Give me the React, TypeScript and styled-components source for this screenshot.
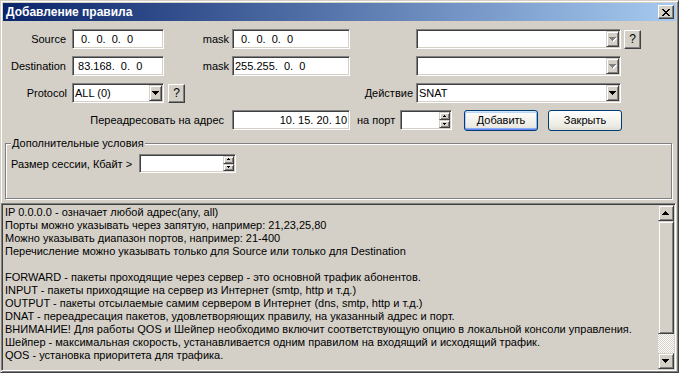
import React from 'react';
import styled, { createGlobalStyle, css } from 'styled-components';

const FACE = '#d4d0c8';

const Global = createGlobalStyle`
  html, body { margin: 0; padding: 0; background: ${FACE}; }
  * { box-sizing: border-box; }
`;

const Window = styled.div`
  width: 679px;
  height: 373px;
  background: ${FACE};
  border: 1px solid;
  border-color: ${FACE} #404040 #404040 ${FACE};
  box-shadow: inset 1px 1px #fff, inset -1px -1px #808080;
  padding: 2px;
  display: flex;
  flex-direction: column;
  font: 11px "Liberation Sans", Arial, sans-serif;
  color: #000;
  overflow: hidden;
`;

const TitleBar = styled.div`
  height: 18px;
  flex: none;
  background: linear-gradient(to right, #0a246a, #a6caf0);
  display: flex;
  align-items: center;
  justify-content: space-between;
  padding: 0 2px 0 3px;
`;

const Title = styled.span`
  color: #fff;
  font-weight: bold;
  font-size: 12px;
`;

const raised = css`
  background: ${FACE};
  border: 1px solid;
  border-color: #fff #404040 #404040 #fff;
  box-shadow: inset -1px -1px #808080;
`;

const smallRaised = css`
  background: ${FACE};
  border: 1px solid;
  border-color: ${FACE} #404040 #404040 ${FACE};
  box-shadow: inset 1px 1px #fff, inset -1px -1px #808080;
`;

const CloseButton = styled.div`
  ${raised};
  width: 16px;
  height: 14px;
  display: flex;
  align-items: center;
  justify-content: center;
  padding-right: 1px;
`;

const FormGrid = styled.div`
  display: grid;
  grid-template-columns: 69px 92px 68px 118px 66px 205px 20px;
  grid-auto-rows: 20px;
  row-gap: 7px;
  margin-top: 8px;
  align-items: center;
`;

const Label = styled.span<{ $pr: number; $span?: number }>`
  grid-column: span ${p => p.$span ?? 1};
  text-align: right;
  padding-right: ${p => p.$pr}px;
  white-space: nowrap;
`;

const Spacer = styled.span``;

const sunken = css`
  border: 1px solid;
  border-color: #808080 #fff #fff #808080;
  box-shadow: inset 1px 1px #404040, inset -1px -1px ${FACE};
  padding: 1px;
`;

const Field = styled.div<{ $align?: 'left' | 'right' }>`
  ${sunken};
  background: #fff;
  height: 20px;
  display: flex;
  align-items: center;
  justify-content: ${p => (p.$align === 'right' ? 'flex-end' : 'flex-start')};
  padding-left: ${p => (p.$align === 'right' ? 1 : 2)}px;
  padding-right: 2px;
  white-space: pre;
`;

const Combo = styled.div`
  ${sunken};
  background: #fff;
  height: 20px;
  display: flex;
  align-items: stretch;
`;

const ComboValue = styled.span`
  flex: 1;
  display: flex;
  align-items: center;
  padding-left: 1px;
  white-space: nowrap;
`;

const ArrowButton = styled.span`
  ${smallRaised};
  width: 13px;
  display: flex;
  align-items: center;
  justify-content: center;
`;

const HelpButton = styled.div<{ $ml: number }>`
  ${raised};
  width: 17px;
  height: 19px;
  margin-left: ${p => p.$ml}px;
  justify-self: start;
  display: flex;
  align-items: center;
  justify-content: center;
  font-size: 12px;
`;

const ActionBar = styled.div`
  grid-column: span 3;
  display: flex;
  align-items: center;
  height: 21px;
`;

const PortLabel = styled.span`
  margin-left: 7px;
  width: 43px;
  white-space: nowrap;
`;

const Spin = styled.div<{ $w: number; $h: number }>`
  ${sunken};
  background: #fff;
  width: ${p => p.$w}px;
  height: ${p => p.$h}px;
  display: flex;
  justify-content: flex-end;
`;

const SpinButtons = styled.div`
  width: 11px;
  display: flex;
  flex-direction: column;
`;

const SpinHalf = styled.span`
  ${smallRaised};
  flex: 1;
  display: flex;
  align-items: center;
  justify-content: center;
`;

const XpButton = styled.div<{ $default?: boolean }>`
  width: 74px;
  height: 21px;
  border: 1px solid #003c74;
  border-radius: 3px;
  background: linear-gradient(#ffffff, #f4f3ee 45%, #ebe9e1 85%, #d8d3c8);
  display: flex;
  align-items: center;
  justify-content: center;
  margin-left: ${p => (p.$default ? 12 : 10)}px;
  box-shadow: ${p =>
    p.$default
      ? 'inset 0 1px #cee7ff, inset 0 -1px #6982ee, inset 1px 0 #b3cbf5, inset -1px 0 #95b4f3, inset 0 2px #bcd4f6, inset 0 -2px #89adf4'
      : 'inset 0 -1px #e3e0d8'};
`;

const Group = styled.div`
  margin: 13px 4px 0 2px;
  height: 56px;
  flex: none;
  border: 1px solid #808080;
  box-shadow: inset 1px 1px #fff, 1px 1px #fff;
  display: flex;
  flex-direction: column;
`;

const Legend = styled.span`
  align-self: flex-start;
  margin: -8px 0 0 5px;
  padding: 0 1px;
  line-height: 14px;
  background: ${FACE};
`;

const GroupRow = styled.div`
  display: flex;
  align-items: center;
  margin-top: 4px;
  padding-left: 5px;
`;

const GroupLabel = styled.span`
  width: 128px;
  white-space: nowrap;
`;

const Memo = styled.div`
  flex: 1;
  margin: 4px 0 -1px -2px;
  border: 1px solid;
  border-color: #808080 #fff #fff #808080;
  box-shadow: inset 1px 1px #404040, inset -1px -1px ${FACE};
  padding: 1px;
  background: ${FACE};
  display: flex;
  overflow: hidden;
`;

const MemoText = styled.div`
  flex: 1;
  padding: 1px 0 0 2px;
  line-height: 13px;
  white-space: pre;
  overflow: hidden;
`;

const ScrollBar = styled.div`
  width: 16px;
  display: flex;
  flex-direction: column;
`;

const ScrollArrow = styled.div`
  ${smallRaised};
  height: 16px;
  flex: none;
  display: flex;
  align-items: center;
  justify-content: center;
`;

const Thumb = styled.div`
  ${smallRaised};
  height: 113px;
  flex: none;
`;

const Track = styled.div`
  flex: 1;
  background: repeating-conic-gradient(#fff 0 25%, ${FACE} 0 50%) 0 0 / 2px 2px;
`;

const Arrow: React.FC<{ dir: 'up' | 'down'; base?: number; disabled?: boolean }> = ({
  dir,
  base = 7,
  disabled,
}) => {
  const rows = (base + 1) / 2;
  const rects: { x: number; y: number; w: number }[] = [];
  for (let i = 0; i < rows; i++) {
    rects.push({ x: i, y: dir === 'down' ? i : rows - 1 - i, w: base - 2 * i });
  }
  const W = base + 1;
  const H = rows + 1;
  return (
    <svg width={W} height={H} viewBox={`0 0 ${W} ${H}`} shapeRendering="crispEdges">
      {disabled &&
        rects.map((r, k) => (
          <rect key={'s' + k} x={r.x + 1} y={r.y + 1} width={r.w} height={1} fill="#fff" />
        ))}
      {rects.map((r, k) => (
        <rect key={k} x={r.x} y={r.y} width={r.w} height={1} fill={disabled ? '#808080' : '#000'} />
      ))}
    </svg>
  );
};

const CloseGlyph: React.FC = () => {
  const pattern = ['##....##', '.##..##.', '..####..', '...##...', '..####..', '.##..##.', '##....##'];
  const rects: React.ReactNode[] = [];
  pattern.forEach((row, y) =>
    row.split('').forEach((c, x) => {
      if (c === '#') rects.push(<rect key={`${x}-${y}`} x={x} y={y} width={1} height={1} fill="#000" />);
    })
  );
  return (
    <svg width={8} height={7} viewBox="0 0 8 7" shapeRendering="crispEdges">
      {rects}
    </svg>
  );
};

const IpField: React.FC<{ value: string[] }> = ({ value }) => (
  <Field>{value.map(o => o.padStart(3, ' ')).join('.')}</Field>
);

const ComboBox: React.FC<{ value?: string; disabled?: boolean }> = ({ value = '', disabled }) => (
  <Combo>
    <ComboValue>{value}</ComboValue>
    <ArrowButton>
      <Arrow dir="down" disabled={disabled} />
    </ArrowButton>
  </Combo>
);

const SpinBox: React.FC<{ w: number; h: number }> = ({ w, h }) => (
  <Spin $w={w} $h={h}>
    <SpinButtons>
      <SpinHalf>
        <Arrow dir="up" base={3} />
      </SpinHalf>
      <SpinHalf>
        <Arrow dir="down" base={3} />
      </SpinHalf>
    </SpinButtons>
  </Spin>
);

const lines = [
  'IP 0.0.0.0 - означает любой адрес(any, all)',
  'Порты можно указывать через запятую, например: 21,23,25,80',
  'Можно указывать диапазон портов, например: 21-400',
  'Перечисление можно указывать только для Source или только для Destination',
  '',
  'FORWARD - пакеты проходящие через сервер - это основной трафик абонентов.',
  'INPUT - пакеты приходящие на сервер из Интернет (smtp, http и т.д.)',
  'OUTPUT - пакеты отсылаемые самим сервером в Интернет (dns, smtp, http и т.д.)',
  'DNAT - переадресация пакетов, удовлетворяющих правилу, на указанный адрес и порт.',
  'ВНИМАНИЕ! Для работы QOS и Шейпер необходимо включит соответствующую опцию в локальной консоли управления.',
  'Шейпер - максимальная скорость, устанавливается одним правилом на входящий и исходящий трафик.',
  'QOS - установка приоритета для трафика.',
];

export default function App() {
  return (
    <>
      <Global />
      <Window>
        <TitleBar>
          <Title>Добавление правила</Title>
          <CloseButton>
            <CloseGlyph />
          </CloseButton>
        </TitleBar>

        <FormGrid>
          <Label $pr={6}>Source</Label>
          <IpField value={['0', '0', '0', '0']} />
          <Label $pr={3}>mask</Label>
          <IpField value={['0', '0', '0', '0']} />
          <Spacer />
          <ComboBox disabled />
          <HelpButton $ml={3}>?</HelpButton>

          <Label $pr={6}>Destination</Label>
          <IpField value={['83', '168', '0', '0']} />
          <Label $pr={3}>mask</Label>
          <IpField value={['255', '255', '0', '0']} />
          <Spacer />
          <ComboBox disabled />
          <Spacer />

          <Label $pr={5}>Protocol</Label>
          <ComboBox value="ALL (0)" />
          <HelpButton $ml={4}>?</HelpButton>
          <Spacer />
          <Label $pr={3}>Действие</Label>
          <ComboBox value="SNAT" />
          <Spacer />

          <Label $pr={8} $span={3}>
            Переадресовать на адрес
          </Label>
          <Field $align="right">10. 15. 20. 10</Field>
          <ActionBar>
            <PortLabel>на порт</PortLabel>
            <SpinBox w={52} h={20} />
            <XpButton $default>Добавить</XpButton>
            <XpButton>Закрыть</XpButton>
          </ActionBar>
        </FormGrid>

        <Group>
          <Legend>Дополнительные условия</Legend>
          <GroupRow>
            <GroupLabel>Размер сессии, Кбайт &gt;</GroupLabel>
            <SpinBox w={97} h={19} />
          </GroupRow>
        </Group>

        <Memo>
          <MemoText>
            {lines.map((l, i) => (
              <div key={i}>{l || ' '}</div>
            ))}
          </MemoText>
          <ScrollBar>
            <ScrollArrow>
              <Arrow dir="up" />
            </ScrollArrow>
            <Thumb />
            <Track />
            <ScrollArrow>
              <Arrow dir="down" />
            </ScrollArrow>
          </ScrollBar>
        </Memo>
      </Window>
    </>
  );
}
